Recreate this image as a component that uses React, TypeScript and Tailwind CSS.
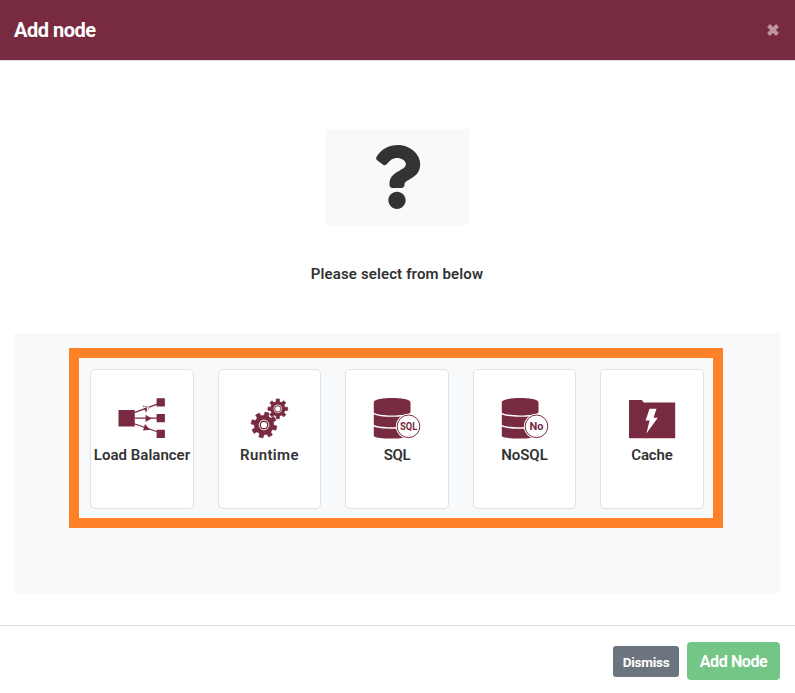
import React from "react";
import { FaQuestion } from "react-icons/fa";

const MAROON = "#782b40";

function gearPath(cx: number, cy: number, outer: number, root: number, rotation: number) {
  const points: string[] = [];
  for (let i = 0; i < 8; i++) {
    const center = rotation + i * 45;
    const corners: [number, number][] = [
      [root, -13],
      [outer, -9.5],
      [outer, 9.5],
      [root, 13],
    ];
    for (const [r, offset] of corners) {
      const a = ((center + offset) * Math.PI) / 180;
      points.push(`${(cx + r * Math.cos(a)).toFixed(2)} ${(cy - r * Math.sin(a)).toFixed(2)}`);
    }
  }
  return `M${points.join("L")}Z`;
}

function LoadBalancerIcon() {
  return (
    <svg width="48" height="42" viewBox="0 0 48 42" fill={MAROON}>
      <path d="M.5 13h16.3v16.5H.5zM38.6 1.3h8.3v8.2h-8.3zM38.6 17h8.3v8.2h-8.3zM38.6 32.8h8.3V41h-8.3z" />
      <path d="M17 15.3 40 6.8M17 21.1h23M17 27l23 8" stroke={MAROON} strokeWidth="1.3" />
      <path d="m27.6 17.8 5.8 3.6-5.8 3.6zM27 27l5 5.8-7 .8z" />
      <path d="m25 8.4 6.8 2-3.8 5z" />
      <path d="m26.2 8.9 2.4 1.8 3-1-3 5.3.4-3.4-3.2-.8z" fill="#fff" />
      <path d="m26 12 3-1" stroke={MAROON} strokeWidth="1" />
    </svg>
  );
}

function GearIcon() {
  return (
    <svg width="48" height="42" viewBox="0 0 48 42">
      <g fill={MAROON} stroke={MAROON} strokeWidth=".6" strokeLinejoin="round">
        <path d={gearPath(18, 28, 13, 9.7, 31)} />
        <path d={gearPath(31.8, 11.8, 10, 7.3, 0)} />
      </g>
      <circle cx="18" cy="28" r="4.9" fill={MAROON} stroke="#fff" strokeWidth=".9" />
      <circle cx="18" cy="28" r="3.1" fill="#fff" />
      <circle cx="31.8" cy="11.8" r="4" fill={MAROON} stroke="#fff" strokeWidth=".7" />
      <circle cx="31.8" cy="11.8" r="2.6" fill="#fff" />
    </svg>
  );
}

function DatabaseIcon({ label }: { label: string }) {
  return (
    <svg width="48" height="42" viewBox="0 0 48 42">
      <path
        fill={MAROON}
        d="M.8 4.9C2-.2 36.3-.2 37.5 4.9V15.4C34 19.4 4 19.4 .8 15.4ZM.8 17.2C6 20.6 32 20.6 37.5 17.2V26.6C32 31.9 5 30.9.8 27.8ZM.8 29.6C6 32.6 32 32.6 37.5 29.6V38.4C33 42.4 5 42.4 .8 39.2Z"
      />
      <circle cx="35.5" cy="29.3" r="12.6" fill="#fff" />
      <circle cx="35.5" cy="29.3" r="11.3" fill="#fff" stroke={MAROON} strokeWidth="1" />
      <text
        x="35.6"
        y={label === "No" ? 33.3 : 32.8}
        textAnchor="middle"
        textLength={label === "No" ? 14 : 17.2}
        lengthAdjust="spacingAndGlyphs"
        fill={MAROON}
        className={
          label === "No"
            ? "font-['Roboto',sans-serif] text-[11.5px] font-bold"
            : "font-['Roboto',sans-serif] text-[10px] font-bold"
        }
      >
        {label}
      </text>
    </svg>
  );
}

function CacheIcon() {
  return (
    <svg width="48" height="42" viewBox="0 0 48 42">
      <path fill={MAROON} d="M1 3.6q0-.6.6-.6h11.8q.8 0 1.2.8l.9 1.7h31.1q.6 0 .6.6v34.5q0 .6-.6.6H1.6q-.6 0-.6-.6z" />
      <path fill="#fff" d="M21.5 11.8h7l-3 9h4.3L18.4 36.5l3.2-13.1h-4z" />
    </svg>
  );
}

const nodes = [
  { name: "Load Balancer", icon: <LoadBalancerIcon />, tracking: "tracking-[0.02px]" },
  { name: "Runtime", icon: <GearIcon />, tracking: "tracking-[0.35px]" },
  { name: "SQL", icon: <DatabaseIcon label="SQL" />, tracking: "tracking-[-0.4px]" },
  { name: "NoSQL", icon: <DatabaseIcon label="No" />, tracking: "tracking-[-0.05px]" },
  { name: "Cache", icon: <CacheIcon />, tracking: "tracking-[-0.1px]" },
];

export default function App() {
  return (
    <div className="flex h-[693px] w-[795px] flex-col bg-white font-['Roboto','Noto_Sans',sans-serif] text-[#333]">
      <header className="flex h-[61px] shrink-0 items-center justify-between border-b border-[#dee2e6] bg-[#782b40] pr-4 pb-px pl-[14px]">
        <h1 className="text-[20px] leading-[30px] font-bold tracking-[-0.5px] whitespace-nowrap text-white">Add node</h1>
        <button aria-label="Close" className="text-[#bb95a0]">
          <svg width="12" height="12" viewBox="0 0 12 12" fill="none" stroke="currentColor" strokeWidth="4">
            <path d="m1.5 1.5 9 9m0-9-9 9" />
          </svg>
        </button>
      </header>

      <main className="flex flex-1 flex-col items-center pr-px">
        <div className="mt-[68px] flex h-24 w-36 justify-center bg-[#f8f9fb] pt-4">
          <FaQuestion className="h-16 w-12" />
        </div>
        <p className="mt-[37px] h-6 text-[15px] leading-6 font-semibold tracking-[0.13px] whitespace-nowrap">
          Please select from below
        </p>
        <section className="mt-[47px] flex h-[260px] w-[766px] justify-center bg-[#f8f9fb] pt-[15px]">
          <div className="mr-[2px] flex h-[180px] w-[654px] justify-center gap-6 border-[10px] border-[#ff8127] pt-[11px] pl-[2px]">
            {nodes.map((node) => (
              <button
                key={node.name}
                className="flex h-[140px] w-[103.5px] shrink-0 flex-col items-center rounded-[5px] border border-[#dee2e6] bg-white pt-[27px]"
              >
                {node.icon}
                <span className={`mt-1 text-[15px] leading-6 font-semibold whitespace-nowrap ${node.tracking}`}>
                  {node.name}
                </span>
              </button>
            ))}
          </div>
        </section>
      </main>

      <footer className="flex h-[68px] shrink-0 items-center justify-end gap-2 border-t border-[#dee2e6] pt-[3px] pr-[15px] font-bold whitespace-nowrap text-white">
        <button className="h-[31px] w-[66px] rounded-[3px] bg-[#6c757d] pt-[2px] text-[13.5px] tracking-[-0.25px]">Dismiss</button>
        <button className="h-[38px] w-[93px] rounded-[4px] bg-[#74c686] pt-[2px] text-[16px] tracking-[-0.4px]">Add Node</button>
      </footer>
    </div>
  );
}
